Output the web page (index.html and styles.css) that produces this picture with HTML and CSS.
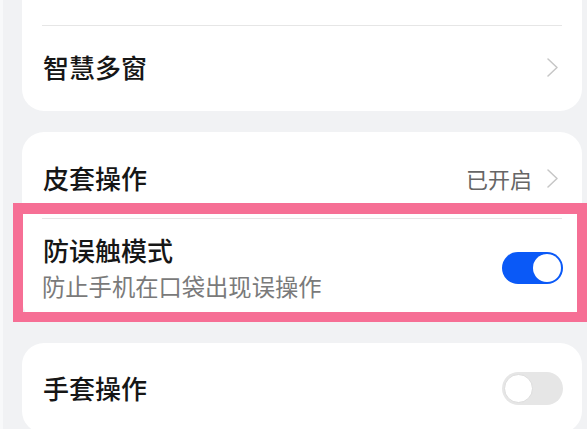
FILE: index.html
```html
<!DOCTYPE html>
<html lang="zh-CN">
<head>
  <meta charset="UTF-8">
  <meta name="viewport" content="width=device-width, initial-scale=1.0">
  <title>辅助功能</title>
  <link rel="stylesheet" href="styles.css">
</head>
<body>
  <div class="screen">
    <div class="card card-first">
      <div class="row divided">
        <span class="title">智慧多窗</span>
        <svg class="chevron" width="11" height="19" viewBox="0 0 11 19"><polyline points="1,1 10,9.5 1,18" fill="none" stroke="#c6c6c6" stroke-width="1.5" stroke-linecap="round" stroke-linejoin="round"/></svg>
      </div>
    </div>

    <div class="card card-cover">
      <div class="row">
        <span class="title">皮套操作</span>
        <span class="side">
          <span class="value">已开启</span>
          <svg class="chevron" width="11" height="19" viewBox="0 0 11 19"><polyline points="1,1 10,9.5 1,18" fill="none" stroke="#c6c6c6" stroke-width="1.5" stroke-linecap="round" stroke-linejoin="round"/></svg>
        </span>
      </div>
      <div class="row divided row-tall">
        <div class="text">
          <span class="title">防误触模式</span>
          <span class="subtitle">防止手机在口袋出现误操作</span>
        </div>
        <span class="switch on"><span class="knob"></span></span>
      </div>
      <div class="highlight"></div>
    </div>

    <div class="card">
      <div class="row row-last">
        <span class="title">手套操作</span>
        <span class="switch"><span class="knob"></span></span>
      </div>
    </div>
  </div>
</body>
</html>
```

FILE: styles.css
```css
/* Base */
body {
  margin: 0;
  background: #f1f2f4;
  font-family: "Noto Sans CJK SC", "Noto Sans", sans-serif;
  overflow: hidden;
}

.screen {
  width: 587px;
  height: 429px;
  border-left: 3px solid #f8f9fa;
  box-sizing: border-box;
  padding: 0 5px 0 19px;
  display: flex;
  flex-direction: column;
  gap: 21px;
}

/* Cards */
.card {
  background: #fff;
  border-radius: 22px;
  padding: 0 20px;
  position: relative;
}

.card-first {
  border-radius: 0 0 22px 22px;
  padding-top: 25px;
}

.row {
  height: 86px;
  display: flex;
  align-items: center;
  justify-content: space-between;
  box-sizing: border-box;
  padding-top: 6px;
}

.divided {
  border-top: 1px solid #e6e6e6;
}

.card-first .row {
  height: 86px;
  padding: 0 0 3px;
}

.row-tall {
  height: 104px;
  padding: 0 0 6px;
}

.row-last {
  height: 90px;
  padding-top: 0;
}

.text {
  display: flex;
  flex-direction: column;
  gap: 5px;
}

.title {
  font-size: 26px;
  line-height: 32px;
  font-weight: 500;
  color: #161616;
  padding-left: 1px;
}

.subtitle {
  font-size: 23.3px;
  line-height: 30px;
  color: #7a7a7a;
}

.side {
  display: flex;
  align-items: center;
  gap: 15px;
  padding-right: 4px;
}

.value {
  font-size: 22px;
  color: #666;
}

.chevron {
  display: block;
  margin-right: 4px;
}

.side .chevron {
  margin-right: 0;
}

/* Switches */
.switch {
  width: 61px;
  height: 33px;
  border-radius: 17px;
  background: #e6e6e6;
  box-sizing: border-box;
  padding: 2px;
  display: flex;
  margin-right: -1px;
}

.switch .knob {
  width: 29px;
  height: 29px;
  border-radius: 50%;
  background: #fff;
  box-sizing: border-box;
  border: 1px solid #dcdcdc;
}

.switch.on {
  background: #0a59f7;
  justify-content: flex-end;
  height: 32px;
}

.switch.on .knob {
  width: 28px;
  height: 28px;
  border: none;
}

/* Highlight frame drawn over the card */
.highlight {
  position: absolute;
  left: -9px;
  right: -5px;
  top: 71px;
  bottom: 0;
  border: 10px solid #f66f95;
  border-top-width: 11px;
}
```
